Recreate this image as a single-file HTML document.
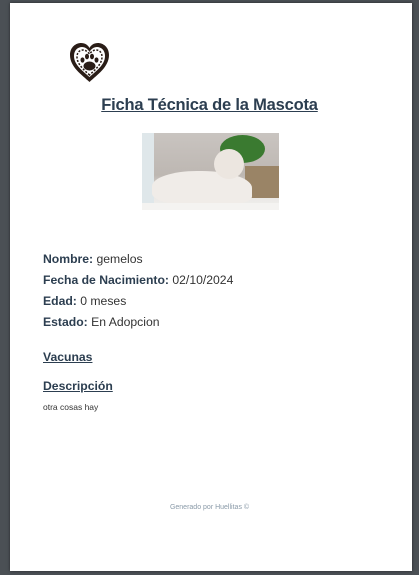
<!DOCTYPE html>
<html><head><meta charset="utf-8"><style>
html,body{margin:0;padding:0;}
body{width:419px;height:575px;background:#4b5055;position:relative;overflow:hidden;font-family:"Liberation Sans",Arial,sans-serif;}
.page{position:absolute;left:10px;top:3px;width:402px;height:568px;background:#fff;box-shadow:0 0 3px rgba(0,0,0,.5);}
.h{position:absolute;left:0;width:419px;top:96px;text-align:center;font-size:16.5px;font-weight:bold;color:#2c3e50;text-decoration:underline;letter-spacing:-0.2px;}
.img{position:absolute;left:142px;top:133px;width:137px;height:77px;overflow:hidden;background:linear-gradient(180deg,#c9c4c0 0%,#bdb7b2 55%,#e8e6e3 80%,#f2f1ef 100%);}
.row{position:absolute;left:43px;font-size:12.2px;color:#333;}
.row b{color:#2c3e50;}
.sec{position:absolute;left:43px;font-size:12.2px;font-weight:bold;color:#2c3e50;text-decoration:underline;}
</style></head><body>
<div class="page"></div>
<svg style="position:absolute;left:68px;top:42px" width="43" height="42" viewBox="0 0 43 42">
<path d="M21.5 40 C14 33 2 25 2 13 C2 5 8 1 13 1 C17 1 20 3 21.5 6 C23 3 26 1 30 1 C35 1 41 5 41 13 C41 25 29 33 21.5 40Z" fill="#2a1d17"/>
<path d="M21.5 35 C15 29 6 23 6 14 C6 8 10 5 14 5 C17 5 20 7 21.5 10 C23 7 26 5 29 5 C33 5 37 8 37 14 C37 23 28 29 21.5 35Z" fill="#fff"/>
<path d="M21.5 33 C16 28 9 22 9 15 C9 10 12 8 15 8 C18 8 20 10 21.5 12 C23 10 25 8 28 8 C31 8 34 10 34 15 C34 22 27 28 21.5 33Z" fill="none" stroke="#2a1d17" stroke-width="1.5" stroke-dasharray="2 1.5"/>
<ellipse cx="21.5" cy="24" rx="6" ry="4.5" fill="#2a1d17"/>
<ellipse cx="14.5" cy="18" rx="2" ry="2.6" fill="#2a1d17"/>
<ellipse cx="19" cy="14.5" rx="2" ry="2.8" fill="#2a1d17"/>
<ellipse cx="24" cy="14.5" rx="2" ry="2.8" fill="#2a1d17"/>
<ellipse cx="28.5" cy="18" rx="2" ry="2.6" fill="#2a1d17"/>
</svg>
<div class="h">Ficha Técnica de la Mascota</div>
<div class="img">
<div style="position:absolute;left:0;top:0;width:12px;height:70px;background:#dfe7ea"></div>
<div style="position:absolute;left:78px;top:2px;width:45px;height:28px;background:#3a7a30;border-radius:50%"></div>
<div style="position:absolute;left:103px;top:33px;width:34px;height:32px;background:#9a8466"></div>
<div style="position:absolute;left:10px;top:38px;width:100px;height:34px;background:#f0ece8;border-radius:45% 50% 25% 35%"></div>
<div style="position:absolute;left:72px;top:16px;width:30px;height:30px;background:#ece6e0;border-radius:50%"></div>
<div style="position:absolute;left:0;top:70px;width:137px;height:7px;background:#f4f3f1"></div>
</div>
<div class="row" style="top:252px"><b>Nombre:</b> gemelos</div>
<div class="row" style="top:273px"><b>Fecha de Nacimiento:</b> 02/10/2024</div>
<div class="row" style="top:294px"><b>Edad:</b> 0 meses</div>
<div class="row" style="top:315px"><b>Estado:</b> En Adopcion</div>
<div class="sec" style="top:350px">Vacunas</div>
<div class="sec" style="top:379px">Descripción</div>
<div class="row" style="top:402px;font-size:8.5px;color:#333">otra cosas hay</div>
<div style="position:absolute;left:0;width:419px;top:504px;text-align:center;font-size:7px;color:#8a9aa8">Generado por Huellitas ©</div>
</body></html>
